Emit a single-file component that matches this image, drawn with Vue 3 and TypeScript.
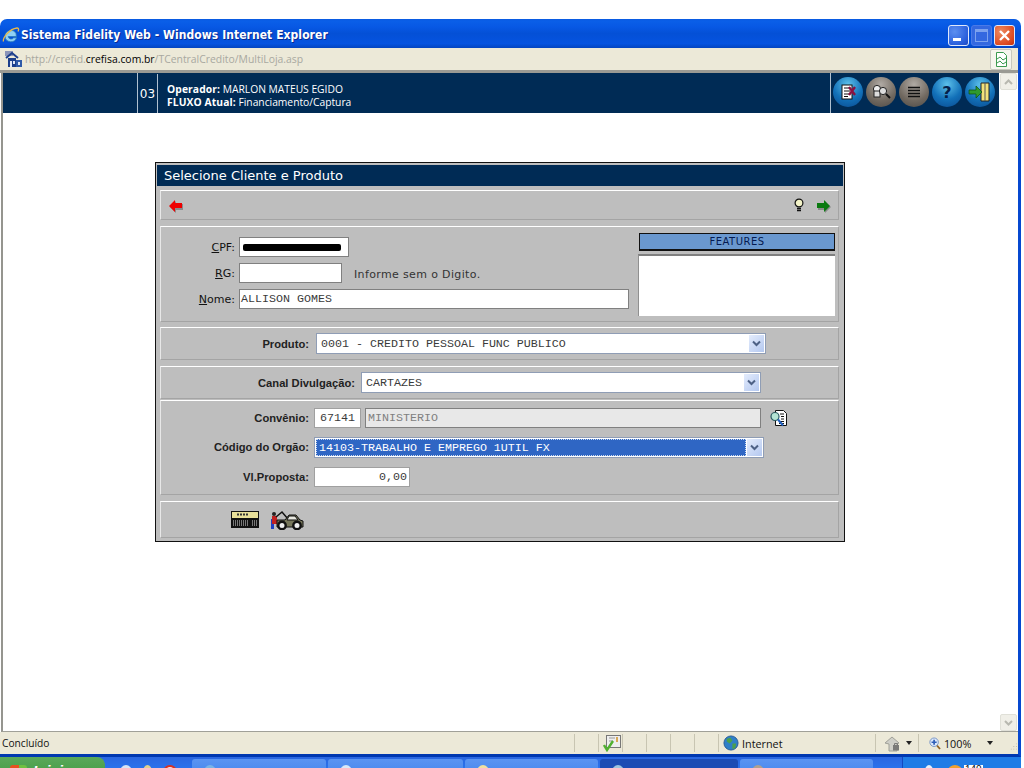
<script setup lang="ts">
const taskButtons = [
  { w: 134, active: false, color: '#7ab4e8' },
  { w: 135, active: false, color: '#d8e8f8' },
  { w: 133, active: false, color: '#f0e0a0' },
  { w: 138, active: true, color: '#9cc4e0' },
  { w: 133, active: false, color: '#b0a090' },
]
</script>

<template>
  <div class="screen">
    <div class="top-gap"></div>

    <div class="titlebar">
      <svg class="ie-logo" width="18" height="18" viewBox="0 0 18 18">
        <path d="M3 10.500a6 6 0 0 1 11-3.400l.4 3.400H6.200a3 3 0 0 0 5.400 1.300h3a6 6 0 0 1-11.600-1.300z" fill="#8fd0f5" stroke="#2a78b8" stroke-width=".8" />
        <path d="M1.500 15.500C.5 12 7 3 15 2c2-.2 1.800 2 1 3.500" fill="none" stroke="#e8b84a" stroke-width="1.300" />
      </svg>
      <span class="title-text">Sistema Fidelity Web - Windows Internet Explorer</span>
      <div class="win-buttons">
        <span class="win-btn"><i class="min-glyph"></i></span>
        <span class="win-btn off"><i class="max-glyph"></i></span>
        <span class="win-btn close">
          <svg width="13" height="13" viewBox="0 0 13 13"><path d="M2 2l9 9M11 2l-9 9" stroke="#fff" stroke-width="2.400" /></svg>
        </span>
      </div>
    </div>

    <div class="frame">
      <div class="addr">
        <svg width="17" height="17" viewBox="0 0 17 17">
          <rect x="0" y="0" width="8" height="5" fill="#8a94b8" />
          <path d="M1 7l6-5 6 5" fill="none" stroke="#1c3f8c" stroke-width="2" />
          <rect x="3" y="7" width="8" height="9" fill="#1c3f8c" />
          <rect x="5" y="10" width="2" height="6" fill="#dfe6f5" />
          <rect x="8" y="10" width="2" height="3" fill="#dfe6f5" />
          <rect x="11" y="9" width="6" height="7" fill="#2f5aa8" />
          <rect x="13" y="11" width="2" height="3" fill="#dfe6f5" />
        </svg>
        <span class="url"><span class="dim">http://crefid.</span>crefisa.com.br<span class="dim">/TCentralCredito/MultiLoja.asp</span></span>
        <span class="addr-doc">
          <svg width="13" height="15" viewBox="0 0 13 15">
            <path d="M1.500.5h7l3 3v11h-10z" fill="#fff" stroke="#3c9a50" />
            <path d="M2 7l3-2 3 3 3-2M2 11l3-2 3 3 3-2" fill="none" stroke="#3c9a50" />
          </svg>
        </span>
      </div>

      <div class="viewport">
        <div class="page">
          <header class="app-head">
            <div class="cell-blank"></div>
            <div class="cell-num">03</div>
            <div class="cell-user">
              <div><b>Operador:</b> MARLON MATEUS EGIDO</div>
              <div><b>FLUXO Atual:</b> Financiamento/Captura</div>
            </div>
            <div class="cell-tools">
              <span class="orb blue">
                <svg width="18" height="18" viewBox="0 0 18 18">
                  <rect x="3" y="2" width="10" height="14" fill="#fff" stroke="#111" />
                  <path d="M5 5h6M5 8h6M5 11h6M5 13.500h4" stroke="#111" />
                  <path d="M10 4l6 8M16 4l-6 8" stroke="#8a1040" stroke-width="2.400" />
                </svg>
              </span>
              <span class="orb gray">
                <svg width="20" height="18" viewBox="0 0 20 18">
                  <circle cx="6" cy="6" r="3.600" fill="#eee" stroke="#222" />
                  <rect x="3" y="8" width="6" height="6" fill="#ddd" stroke="#222" />
                  <circle cx="12" cy="8" r="3.600" fill="#ddd" stroke="#222" />
                  <path d="M15 11l4 4" stroke="#111" stroke-width="2" />
                </svg>
              </span>
              <span class="orb gray">
                <svg width="14" height="12" viewBox="0 0 14 12"><path d="M1 1.500h12M1 4.500h12M1 7.500h12M1 10.500h12" stroke="#111" stroke-width="1.500" /></svg>
              </span>
              <span class="orb blue"><span class="qmark">?</span></span>
              <span class="orb blue">
                <svg width="24" height="20" viewBox="0 0 24 20">
                  <path d="M13 1h8v18h-8z" fill="#f2e27a" stroke="#222" />
                  <path d="M17 1v18" stroke="#555" />
                  <path d="M1 8h7V4l6 6-6 6v-4H1z" fill="#2f9a2f" stroke="#0b4d0b" stroke-width=".7" />
                </svg>
              </span>
            </div>
          </header>

          <section class="dialog">
            <h1 class="dialog-title">Selecione Cliente e Produto</h1>

            <div class="panel nav-panel">
              <svg width="14" height="14" viewBox="0 0 14 14">
                <path d="M1 8l6-6v3h7v6H7v3z" fill="#8a8a8a" />
                <path d="M0 7l6-6v3h7v5H6v4z" fill="#ee0000" />
              </svg>
              <span class="nav-right">
                <svg width="10" height="15" viewBox="0 0 10 15">
                  <circle cx="5" cy="5" r="3.900" fill="#f4f4c8" stroke="#111" stroke-width="1.200" />
                  <path d="M3 10.500h4M3 12.500h4" stroke="#111" stroke-width="1.600" />
                </svg>
                <svg width="14" height="14" viewBox="0 0 14 14">
                  <path d="M14 8L8 2v3H1v6h7v3z" fill="#8a8a8a" />
                  <path d="M13 7L7 1v3H0v5h7v4z" fill="#0a7a10" />
                </svg>
              </span>
            </div>

            <div class="panel client-panel">
              <div class="client-fields">
                <div class="row">
                  <label class="vlabel"><u>C</u>PF:</label>
                  <span class="input cpf"><span class="redact"></span></span>
                </div>
                <div class="row">
                  <label class="vlabel"><u>R</u>G:</label>
                  <span class="input rg"></span>
                  <span class="hint">Informe sem o Digito.</span>
                </div>
                <div class="row">
                  <label class="vlabel"><u>N</u>ome:</label>
                  <span class="input nome">ALLISON GOMES</span>
                </div>
              </div>
              <div class="features">
                <div class="features-head">FEATURES</div>
                <div class="features-box"></div>
              </div>
            </div>

            <div class="panel line-panel produto">
              <label class="alabel w-produto">Produto:</label>
              <span class="select s-produto">
                <span class="select-text">0001 - CREDITO PESSOAL FUNC PUBLICO</span>
                <span class="arrow"><svg width="9" height="7" viewBox="0 0 9 7"><path d="M1 1.500l3.500 3.500L8 1.500" fill="none" stroke="#4d6185" stroke-width="2" /></svg></span>
              </span>
            </div>

            <div class="panel line-panel canal">
              <label class="alabel w-canal">Canal Divulgação:</label>
              <span class="select s-canal">
                <span class="select-text">CARTAZES</span>
                <span class="arrow"><svg width="9" height="7" viewBox="0 0 9 7"><path d="M1 1.500l3.500 3.500L8 1.500" fill="none" stroke="#4d6185" stroke-width="2" /></svg></span>
              </span>
            </div>

            <div class="panel convenio-panel">
              <div class="row2">
                <label class="alabel w-conv">Convênio:</label>
                <span class="input conv-code">67141</span>
                <span class="input conv-name">MINISTERIO</span>
                <svg class="doc-search" width="18" height="19" viewBox="0 0 18 19">
                  <path d="M5.500 1.500h8l3 3v12h-11z" fill="#fff" stroke="#111" />
                  <path d="M10 5h4M11 7.500h3M11 10h3M9 12.500h5M9 14.500h5" stroke="#111" />
                  <circle cx="5" cy="7.500" r="4" fill="#b4e4d4" stroke="#2a5a60" stroke-width="1.200" />
                  <path d="M8 10.500l5 6" stroke="#2060c0" stroke-width="2" />
                </svg>
              </div>
              <div class="row2">
                <label class="alabel w-conv">Código do Orgão:</label>
                <span class="select s-orgao">
                  <span class="select-text selected">14103-TRABALHO E EMPREGO 1UTIL FX</span>
                  <span class="arrow"><svg width="9" height="7" viewBox="0 0 9 7"><path d="M1 1.500l3.500 3.500L8 1.500" fill="none" stroke="#4d6185" stroke-width="2" /></svg></span>
                </span>
              </div>
              <div class="row2">
                <label class="alabel w-conv">Vl.Proposta:</label>
                <span class="input valor">0,00</span>
              </div>
            </div>

            <div class="panel tools-panel">
              <svg width="28" height="17" viewBox="0 0 28 17">
                <rect x="0" y="0" width="28" height="17" fill="#111" />
                <rect x="1" y="1" width="26" height="6" fill="#e8e09a" />
                <path d="M6 3.500h12" stroke="#333" stroke-width="2" stroke-dasharray="2 1" />
                <path d="M2 10h16M2 12h16M2 14h16M21 10h5M21 12h5M21 14h5" stroke="#ddd" stroke-dasharray="1 1" />
              </svg>
              <svg width="34" height="20" viewBox="0 0 34 20">
                <rect x="1" y="9" width="3" height="10" fill="#2040c0" />
                <rect x="2" y="6" width="5" height="8" fill="#c02020" />
                <circle cx="4" cy="4" r="2" fill="#222" />
                <path d="M6 7L12 2l6 7" fill="none" stroke="#111" stroke-width="1.500" />
                <path d="M7 10h8l4-5h7l4 5 3 1v6H7z" fill="#76765a" stroke="#111" />
                <path d="M19 6h6l3 4h-11z" fill="#e8e8e0" stroke="#111" />
                <circle cx="12" cy="15.500" r="3.700" fill="#eee" stroke="#111" stroke-width="2.400" />
                <circle cx="27" cy="15.500" r="3.700" fill="#eee" stroke="#111" stroke-width="2.400" />
              </svg>
            </div>
          </section>
        </div>

        <div class="scrollbar">
          <span class="sb-btn"><svg width="9" height="6" viewBox="0 0 9 6"><path d="M1 5l3.500-3.500L8 5" fill="none" stroke="#b8b8b0" stroke-width="2" /></svg></span>
          <span class="sb-btn"><svg width="9" height="6" viewBox="0 0 9 6"><path d="M1 1l3.500 3.500L8 1" fill="none" stroke="#b8b8b0" stroke-width="2" /></svg></span>
        </div>
      </div>

      <footer class="status">
        <span class="status-text">Concluído</span>
        <span class="st-cell w3"></span>
        <span class="st-cell w3 center">
          <svg width="18" height="17" viewBox="0 0 18 17">
            <rect x="3.500" y=".5" width="14" height="12" fill="#eee" stroke="#777" />
            <path d="M6 3h6M6 6h4" stroke="#999" />
            <path d="M14 2v5" stroke="#d09020" stroke-width="1.500" />
            <path d="M1 10l3 5 6-9" fill="none" stroke="#50b030" stroke-width="2.400" />
          </svg>
        </span>
        <span class="st-cell w3"></span>
        <span class="st-cell w3"></span>
        <span class="st-cell w3"></span>
        <span class="st-cell w3"></span>
        <span class="st-cell zone">
          <svg width="16" height="16" viewBox="0 0 17 17">
            <circle cx="8.500" cy="8.500" r="7.500" fill="#2f7fc8" stroke="#255a95" />
            <path d="M4 4l4-1 2 3-3 3-3-2zM10 9l4 0-1 5-3 1z" fill="#4da04a" />
          </svg>
          <span>Internet</span>
        </span>
        <span class="st-cell lock">
          <svg width="18" height="17" viewBox="0 0 18 17">
            <path d="M1 8l7-6 7 6-2 1v7H5V9z" fill="#cfcfc8" stroke="#a0a098" />
            <rect x="9" y="10" width="6" height="5.500" fill="#7a7a78" />
            <path d="M10.500 10V8.500h3V10" fill="none" stroke="#7a7a78" />
          </svg>
          <i class="tri"></i>
        </span>
        <span class="st-cell zoom">
          <svg width="14" height="15" viewBox="0 0 14 15">
            <circle cx="6" cy="6" r="5" fill="#dce8fa" stroke="#6a8ac0" />
            <path d="M3 6h6M6 3v6" stroke="#2f5fb8" stroke-width="2" />
            <path d="M9.500 10l3.500 4" stroke="#906020" stroke-width="2" />
          </svg>
          <span>100%</span>
          <i class="tri tri-zoom"></i>
          <svg class="grip" width="9" height="9" viewBox="0 0 9 9">
            <path d="M7 1h1v1H7zM4 4h1v1H4zM7 4h1v1H7zM1 7h1v1H1zM4 7h1v1H4zM7 7h1v1H7z" fill="#b8b5a4" />
          </svg>
        </span>
      </footer>
    </div>

    <div class="taskbar">
      <div class="start">
        <i class="flag"></i>
        <span>Iniciar</span>
      </div>
      <div class="quick">
        <i class="q q1"></i><i class="q q2"></i><i class="q q3"></i>
      </div>
      <div class="tasks">
        <div
          v-for="(b, i) in taskButtons"
          :key="i"
          class="task"
          :class="{ active: b.active }"
          :style="{ width: b.w + 'px' }"
        >
          <i class="task-ico" :style="{ background: b.color }"></i>
        </div>
      </div>
      <div class="tray">
        <i class="tray-dot d1"></i>
        <i class="tray-dot d2"></i>
        <span class="tray-num">140</span>
      </div>
    </div>
  </div>
</template>

<style>
html, body { margin: 0; background: #fff; overflow: hidden; }
</style>

<style scoped>
.screen {
  width: 1021px;
  height: 768px;
  display: flex;
  flex-direction: column;
  overflow: hidden;
  font-family: "DejaVu Sans", sans-serif;
  color: #000;
}
.top-gap { height: 19px; flex: none; background: #fff; }

.titlebar {
  height: 29px;
  flex: none;
  display: flex;
  align-items: center;
  padding: 0 6px 0 2px;
  border-radius: 7px 7px 0 0;
  background: linear-gradient(#0a5ae0 0, #0a5fe8 2px, #0758e4 8px, #0450d6 50%, #0553e0 85%, #0344c0);
  box-sizing: border-box;
}
.ie-logo { flex: none; margin-top: 2px; }
.title-text {
  margin: 3px 0 0 1px;
  color: #fff;
  font-family: "DejaVu Sans Condensed", "DejaVu Sans", sans-serif;
  font-stretch: condensed;
  font-weight: 700;
  font-size: 12px;
  letter-spacing: .06px;
  text-shadow: 1px 1px 0 #0a2a90;
  white-space: nowrap;
}
.win-buttons { margin: 3px 0 0 auto; display: flex; gap: 2px; }
.win-btn {
  width: 21px;
  height: 21px;
  box-sizing: border-box;
  border: 1px solid #dfe8fb;
  border-radius: 3px;
  background: radial-gradient(circle at 30% 30%, #5c8ff0, #2a5fdc 70%, #2049c0);
  display: flex;
  align-items: center;
  justify-content: center;
}
.win-btn.off { border-color: #4a7ae8; background: #3468e0; }
.win-btn.close { background: radial-gradient(circle at 30% 30%, #ee8a60, #dd4a20 70%, #c03010); }
.min-glyph { width: 8px; height: 3px; background: #fff; margin-top: 9px; margin-right: 4px; }
.max-glyph { width: 11px; height: 9px; border: 1px solid #7da2ee; border-top-width: 3px; }

.frame {
  flex: 1;
  min-height: 0;
  display: flex;
  flex-direction: column;
  border-right: 3px solid #0648d0;
  border-bottom: 3px solid #0038b0;
  background: #fff;
}
.addr {
  height: 25px;
  flex: none;
  display: flex;
  align-items: center;
  background: #ece9d8;
  box-sizing: border-box;
  padding: 0 0 0 5px;
  border-bottom: 3px solid #9a9a94;
}
.url {
  margin-left: 3px;
  font-family: "Open Sans", sans-serif;
  font-size: 10.400px;
  color: #000;
  white-space: nowrap;
}
.url .dim { color: #a8a8a0; }
.addr-doc {
  margin-left: auto;
  margin-right: 6px;
  width: 22px;
  height: 21px;
  border: 1px solid #c8c8be;
  border-radius: 2px;
  background: #f6f5ee;
  display: flex;
  align-items: center;
  justify-content: center;
  box-sizing: border-box;
}

.viewport {
  flex: 1;
  min-height: 0;
  display: flex;
  background: #fff;
  margin-left: 1px;
  border-left: 2px solid #95958f;
  border-bottom: 1px solid #a0a098;
}
.page { flex: 1; min-width: 0; }

.app-head {
  height: 40px;
  display: flex;
  background: #002b55;
  color: #fff;
  box-sizing: border-box;
  margin-right: 1px;
}
.cell-blank { width: 134px; flex: none; border-right: 1px solid #b0c0d0; }
.cell-num {
  width: 19px;
  flex: none;
  border-right: 1px solid #b0c0d0;
  font-size: 12px;
  display: flex;
  align-items: center;
  justify-content: center;
  margin-top: 1px;
}
.cell-user {
  padding: 10px 0 0 9px;
  font-family: "Open Sans", sans-serif;
  font-size: 10.300px;
  line-height: 13px;
  letter-spacing: -.02px;
  white-space: nowrap;
}
.cell-user b { letter-spacing: .1px; }
.cell-tools {
  margin-left: auto;
  width: 169px;
  box-sizing: border-box;
  border-left: 1px solid #b0c0d0;
  display: flex;
  align-items: center;
  gap: 3px;
  padding-left: 2px;
}
.orb {
  width: 30px;
  height: 30px;
  border-radius: 50%;
  display: flex;
  align-items: center;
  justify-content: center;
  flex: none;
  margin-top: -2px;
}
.orb.blue { background: radial-gradient(circle at 50% 25%, #5cc0ea, #1270b8 55%, #0a4a90); }
.orb.gray { background: radial-gradient(circle at 50% 25%, #b0aaa4, #70685f 60%, #4e4a46); }
.qmark { color: #05204a; font-weight: 700; font-size: 16px; }

.dialog {
  width: 690px;
  height: 380px;
  box-sizing: border-box;
  margin: 49px 0 0 152px;
  background: #bebebe;
  border: 1px solid #111;
  padding: 2px 1px 1px;
  display: flex;
  flex-direction: column;
}
.dialog-title {
  margin: 0;
  height: 21px;
  line-height: 22px;
  flex: none;
  background: #002b55;
  color: #fff;
  font-weight: 400;
  font-size: 13px;
  padding-left: 7px;
}
.panel {
  margin: 4px 4px 0 3px;
  border-top: 1px solid #fff;
  border-left: 1px solid #e8e8e8;
  border-bottom: 1px solid #a4a4a4;
  border-right: 1px solid #a4a4a4;
  box-sizing: border-box;
  flex: none;
}
.nav-panel {
  height: 30px;
  display: flex;
  align-items: center;
  padding: 1px 7px 0 8px;
}
.nav-right { margin-left: auto; display: flex; align-items: center; gap: 13px; }

.client-panel {
  margin-top: 6px;
  height: 96px;
  display: flex;
  padding: 10px 0 0 0;
}
.client-fields { width: 477px; flex: none; }
.row { display: flex; align-items: center; height: 20px; margin-bottom: 6px; }
.vlabel {
  width: 78px;
  flex: none;
  text-align: right;
  padding-right: 4px;
  box-sizing: border-box;
  font-size: 11px;
  color: #111;
}
.input {
  box-sizing: border-box;
  height: 20px;
  background: #fff;
  border: 1px solid #808080;
  font-family: "Liberation Mono", monospace;
  font-size: 11.670px;
  line-height: 18px;
  color: #3a3a3a;
  padding: 0 1px;
  display: block;
  white-space: pre;
  flex: none;
}
.cpf { width: 110px; display: flex; align-items: center; padding-left: 3px; }
.redact { display: block; width: 98px; height: 7px; background: #000; border-radius: 2px; }
.rg { width: 103px; }
.hint { margin: 3px 0 0 12px; font-size: 11px; color: #333; letter-spacing: .36px; }
.nome { width: 390px; }

.features { width: 197px; flex: none; margin-top: -4px; }
.features-head {
  height: 18px;
  margin-left: 1px;
  box-sizing: border-box;
  border: 1px solid #111;
  border-bottom-width: 2px;
  background: #6a98cf;
  color: #051a50;
  font-size: 10px;
  text-align: center;
  line-height: 15px;
  letter-spacing: .5px;
}
.features-box {
  height: 62px;
  margin-top: 3px;
  background: #fff;
  border-top: 2px solid #808080;
  border-left: 1px solid #909090;
  box-sizing: border-box;
}

.line-panel {
  display: flex;
  align-items: center;
  font-family: "Liberation Sans", sans-serif;
}
.produto { height: 33px; margin-top: 5px; }
.canal { height: 33px; margin-top: 6px; }
.alabel {
  flex: none;
  text-align: right;
  font-family: "Liberation Sans", sans-serif;
  font-weight: 700;
  font-size: 11.200px;
  color: #222;
  box-sizing: border-box;
  white-space: nowrap;
}
.w-produto { width: 155px; padding-right: 7px; }
.w-canal { width: 200px; padding-right: 6px; }
.w-conv { width: 153px; padding-right: 5px; line-height: 20px; }
.select {
  box-sizing: border-box;
  height: 21px;
  background: #fff;
  border: 1px solid #8f9db5;
  display: flex;
  align-items: stretch;
  flex: none;
  padding: 1px;
}
.select-text {
  flex: 1;
  font-family: "Liberation Mono", monospace;
  font-size: 11.670px;
  line-height: 16px;
  color: #3a3a3a;
  padding: 1px 0 0 3px;
  white-space: pre;
  overflow: hidden;
}
.select-text.selected { background: #2f66c4; color: #fff; outline: 1px dotted #c8d8f0; outline-offset: -1px; }
.arrow {
  width: 15px;
  flex: none;
  background: linear-gradient(135deg, #e4ecfc, #b4c8f0);
  display: flex;
  align-items: center;
  justify-content: center;
  margin-left: 1px;
}
.s-produto { width: 450px; }
.s-canal { width: 400px; }
.s-orgao { width: 450px; }

.convenio-panel { height: 95px; margin-top: 1px; padding-top: 7px; }
.row2 { display: flex; align-items: flex-start; height: 20px; margin-bottom: 9px; }
.row2:nth-child(2) { margin-bottom: 10px; }
.conv-code { width: 47px; text-align: center; border-color: #a0a0a0; }
.conv-name {
  width: 396px;
  margin-left: 4px;
  background: #e8e8e8;
  color: #808080;
  padding-left: 2px;
}
.doc-search { margin: 1px 0 0 9px; }
.valor { width: 96px; text-align: right; padding-right: 2px; border-color: #a0a0a0; }

.tools-panel {
  height: 37px;
  margin-top: 6px;
  display: flex;
  align-items: center;
  padding-left: 70px;
  gap: 11px;
}

.scrollbar {
  width: 18px;
  flex: none;
  display: flex;
  flex-direction: column;
  justify-content: space-between;
  background: #fff;
}
.sb-btn {
  width: 17px;
  height: 17px;
  border: 1px solid #e0e0d8;
  border-radius: 2px;
  background: #f0efe8;
  display: flex;
  align-items: center;
  justify-content: center;
  box-sizing: border-box;
}

.status {
  height: 22px;
  flex: none;
  display: flex;
  align-items: center;
  background: #ece9d8;
  font-family: "Open Sans", sans-serif;
  font-size: 10.800px;
  color: #111;
  box-sizing: border-box;
  padding-left: 2px;
}
.status-text { width: 572px; flex: none; font-size: 10.200px; }
.st-cell {
  height: 18px;
  border-left: 1px solid #c8c5b2;
  display: flex;
  align-items: center;
  box-sizing: border-box;
  flex: none;
}
.w3 { width: 24px; }
.center { padding-left: 4px; }
.zone { width: 157px; gap: 3px; padding-left: 4px; }
.lock { width: 43px; gap: 4px; padding-left: 8px; }
.zoom { width: 100px; gap: 3px; padding-left: 10px; }
.tri { width: 0; height: 0; border: 3px solid transparent; border-top: 4px solid #222; border-bottom: 0; }
.tri-zoom { margin-left: 13px; }
.grip { margin: 7px 0 0 14px; }

.taskbar {
  height: 11px;
  flex: none;
  display: flex;
  overflow: hidden;
  background: linear-gradient(#2a66e0, #2a72ec);
  box-sizing: border-box;
  align-items: flex-start;
}
.start {
  width: 105px;
  height: 24px;
  flex: none;
  background: linear-gradient(#5aa85a, #3f9a3f);
  border-radius: 0 8px 0 0;
  display: flex;
  padding: 5px 0 0 10px;
  box-sizing: border-box;
  color: #fff;
  font-family: "Liberation Sans", sans-serif;
  font-weight: 700;
  font-style: italic;
  font-size: 15px;
  gap: 6px;
}
.flag { width: 17px; height: 16px; margin-top: 3px; background: linear-gradient(90deg, #e85020 50%, #70c040 50%); border-radius: 3px; }
.quick { width: 87px; flex: none; display: flex; gap: 11px; padding: 8px 0 0 15px; box-sizing: border-box; }
.q { width: 12px; height: 14px; border-radius: 50% 50% 0 0; background: #d8e4f4; }
.q2 { width: 9px; background: #e0d090; }
.q3 { width: 14px; background: #e8e8f0; border: 2px solid #d83020; box-sizing: border-box; }
.tasks { display: flex; gap: 2px; flex: none; }
.task {
  height: 24px;
  margin-top: 2px;
  flex: none;
  border-radius: 3px 3px 0 0;
  background: linear-gradient(#5a94f2, #3c80ea);
  box-sizing: border-box;
  padding: 6px 0 0 12px;
}
.task.active { background: #1c4cb4; }
.task-ico { display: block; width: 12px; height: 14px; border-radius: 50%; }
.tray {
  margin-left: auto;
  width: 119px;
  height: 24px;
  background: #1f7ce6;
  display: flex;
  align-items: flex-start;
  gap: 13px;
  padding: 8px 0 0 22px;
  box-sizing: border-box;
  border-left: 1px solid #1448c0;
}
.tray-dot { width: 8px; height: 12px; border-radius: 50%; background: #e8f0fa; }
.tray-dot.d2 { width: 14px; background: #f0a030; margin-left: 2px; margin-right: -11px; }
.tray-num {
  background: #fff;
  color: #111;
  font-size: 10px;
  line-height: 10px;
  padding: 0 1px;
  font-family: "Liberation Sans", sans-serif;
}
</style>
